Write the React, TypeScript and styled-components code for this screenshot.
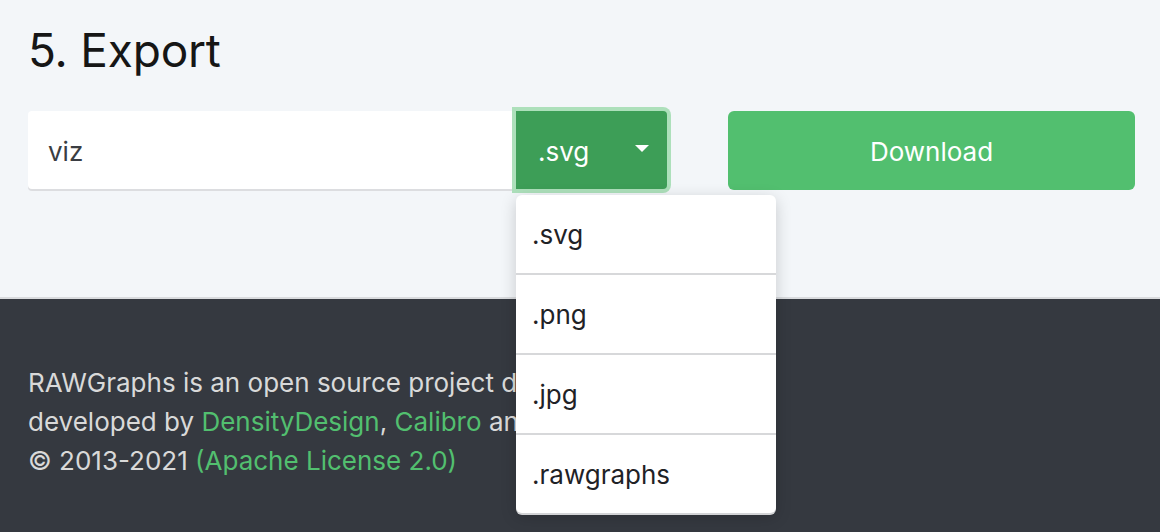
import React from 'react'
import styled, { createGlobalStyle } from 'styled-components'

const formats = ['.svg', '.png', '.jpg', '.rawgraphs']

export default function App() {
    return (
        <>
            <GlobalStyle />
            <Page>
                <Section>
                    <Title>5. Export</Title>
                    <Row>
                        <FileGroup>
                            <NameInput defaultValue="viz" />
                            <SelectWrap>
                                <SelectButton>
                                    .svg
                                    <Caret />
                                </SelectButton>
                                <Menu>
                                    {formats.map(f => (
                                        <MenuItem key={f}>{f}</MenuItem>
                                    ))}
                                </Menu>
                            </SelectWrap>
                        </FileGroup>
                        <DownloadButton>Download</DownloadButton>
                    </Row>
                </Section>
                <Footer>
                    <FooterText>
                        RAWGraphs is an open source project designed and
                        developed by <Link>DensityDesign</Link>, <Link>Calibro</Link> and <Link>Inmagik</Link>.
                        <br />© 2013-2021 <Link>(Apache License 2.0)</Link>
                    </FooterText>
                </Footer>
            </Page>
        </>
    )
}

const GlobalStyle = createGlobalStyle`
    html, body {
        margin: 0;
        padding: 0;
        background: #353940;
    }
    body {
        font-family: Inter, "Noto Sans", sans-serif;
    }
`
const Page = styled.div`
    width: 1160px;
    height: 532px;
    overflow: hidden;
    display: flex;
    flex-direction: column;
`
const Section = styled.section`
    background: #f3f6f9;
    padding: 22px 25px 0 28px;
    height: 275px;
    border-bottom: 2px solid #d9dbde;
    flex-shrink: 0;
`
const Title = styled.h2`
    font-size: 46px;
    font-weight: 400;
    color: #161616;
    margin: 0;
    line-height: 56px;
    letter-spacing: -0.2px;
`
const Row = styled.div`
    display: flex;
    margin-top: 33px;
    gap: 61px;
`
const FileGroup = styled.div`
    display: flex;
    width: 639px;
`
const NameInput = styled.input`
    width: 488px;
    height: 78px;
    box-sizing: border-box;
    border: none;
    border-radius: 4px 0 0 4px;
    background: #fff;
    box-shadow: 0 2px 0 #dcdde0;
    padding: 2px 20px 0;
    font-family: Inter, sans-serif;
    font-size: 26px;
    color: #3a3d42;
    outline: none;
`
const SelectWrap = styled.div`
    position: relative;
`
const SelectButton = styled.button`
    width: 151px;
    height: 78px;
    box-sizing: border-box;
    border: none;
    border-radius: 0 4px 4px 0;
    background: #3d9e57;
    color: #fff;
    font-family: Inter, sans-serif;
    font-size: 26px;
    display: flex;
    align-items: center;
    justify-content: space-between;
    padding: 2px 18px 0 22px;
    box-shadow: 0 0 0 4px #ade0bb;
    position: relative;
    z-index: 1;
`
const Caret = styled.span`
    width: 0;
    height: 0;
    border-left: 7px solid transparent;
    border-right: 7px solid transparent;
    border-top: 7px solid #fff;
    margin-bottom: 6px;
`
const Menu = styled.ul`
    position: absolute;
    top: 84px;
    left: 0;
    width: 260px;
    margin: 0;
    padding: 0;
    list-style: none;
    background: #fff;
    border-radius: 6px;
    box-shadow: 0 2px 0 #d3d4d6, 0 4px 16px rgba(0, 0, 0, 0.18);
    z-index: 5;
`
const MenuItem = styled.li`
    height: 78px;
    display: flex;
    align-items: center;
    padding-left: 16px;
    font-size: 26px;
    color: #1f2226;
    & + & {
        border-top: 2px solid #d7d8da;
    }
`
const DownloadButton = styled.button`
    width: 407px;
    height: 79px;
    border: none;
    border-radius: 6px;
    background: #52bf6f;
    color: #fff;
    font-family: Inter, sans-serif;
    font-size: 26px;
    padding-top: 2px;
`
const Footer = styled.footer`
    flex: 1;
    background: #353940;
    padding: 64px 28px 0;
`
const FooterText = styled.p`
    margin: 0;
    width: 680px;
    font-size: 26px;
    line-height: 39px;
    color: #d9d9d9;
`
const Link = styled.a`
    color: #52bf6f;
`
